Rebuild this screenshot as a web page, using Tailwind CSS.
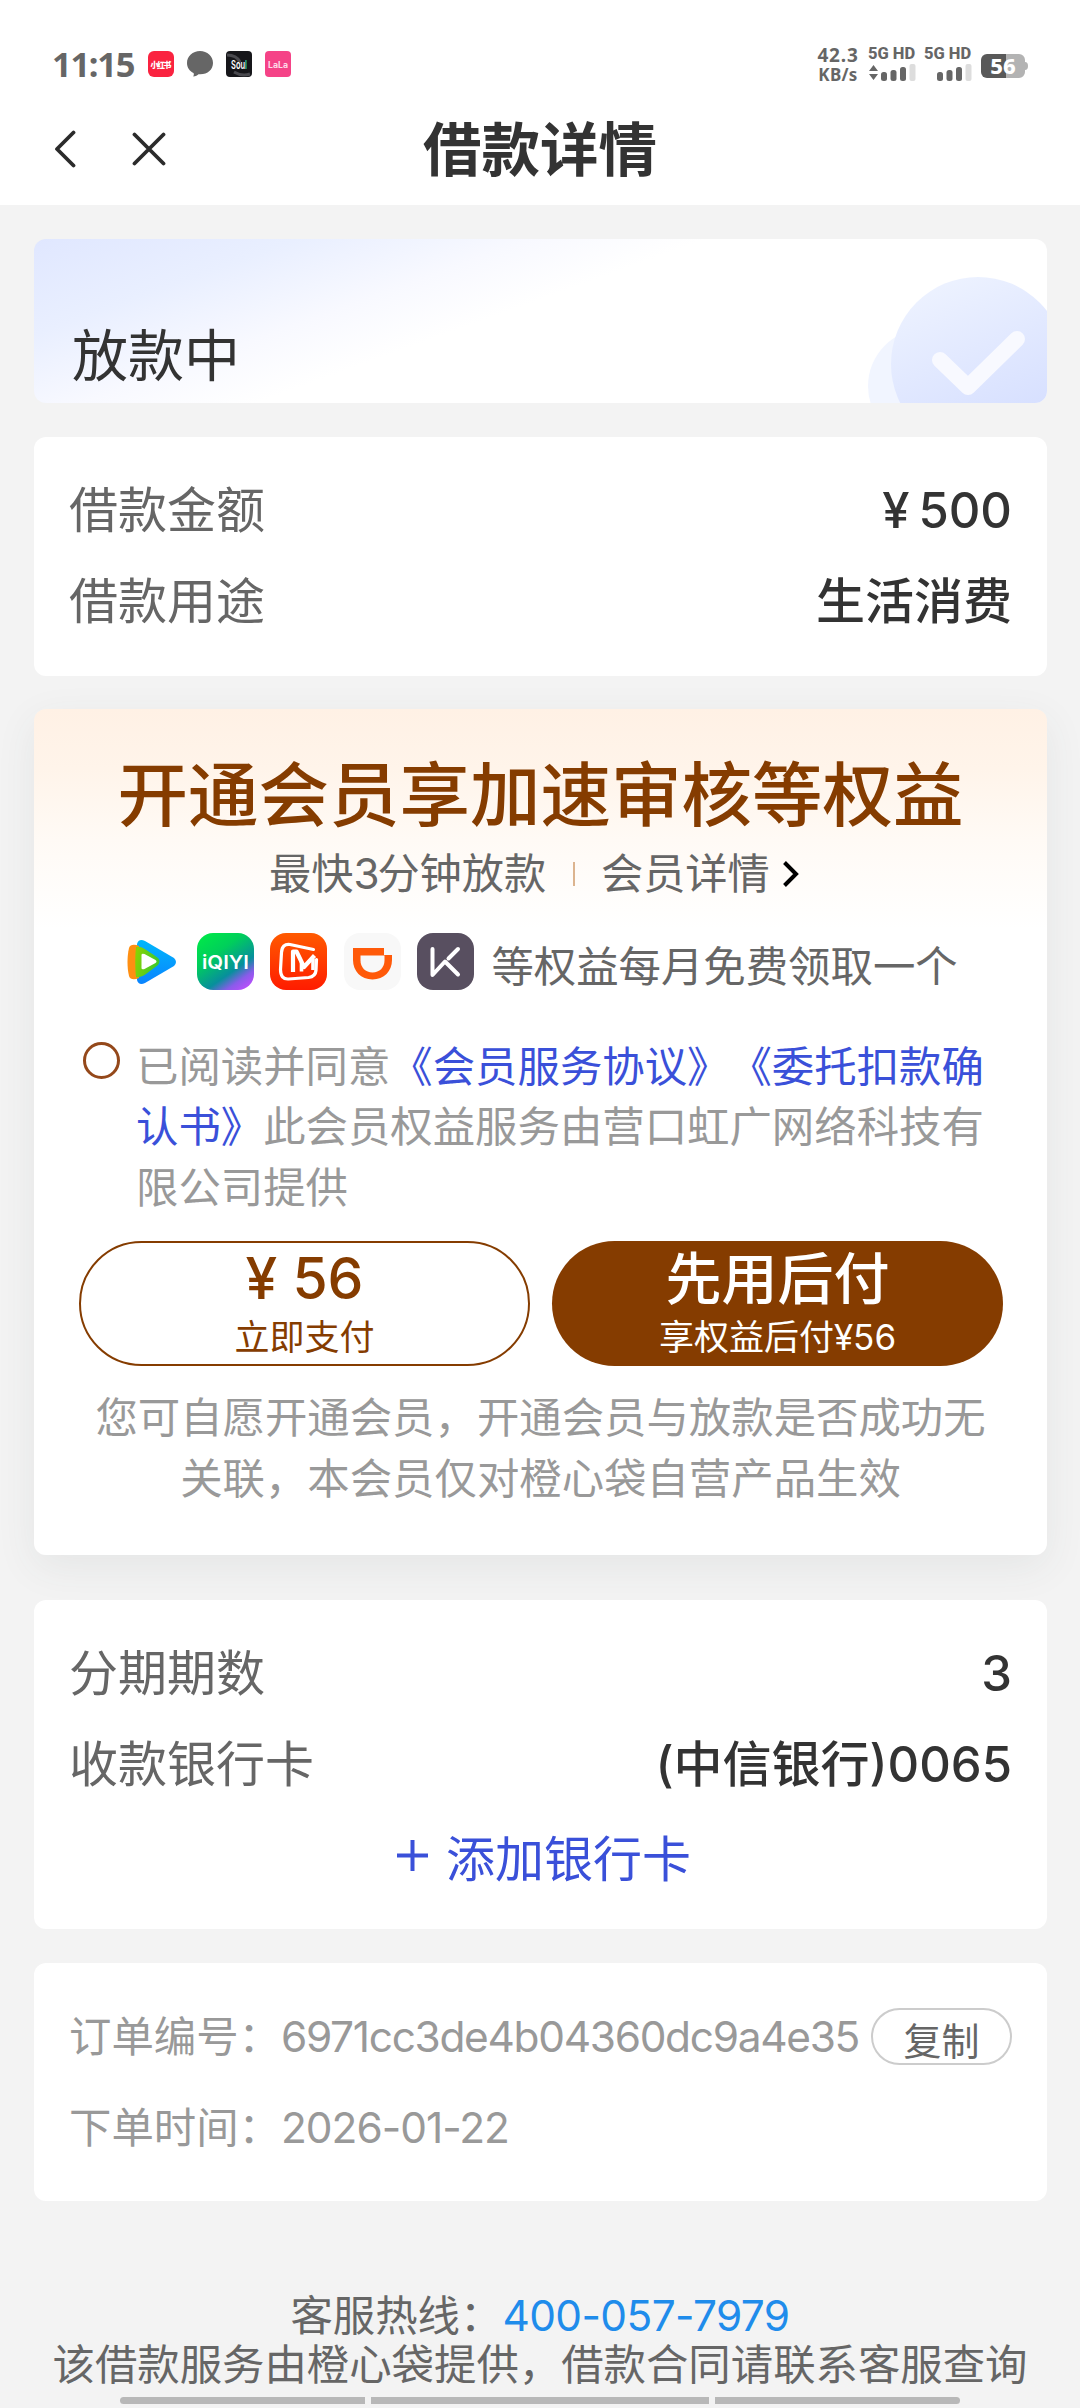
<!DOCTYPE html>
<html lang="zh-CN">
<head>
    <meta charset="UTF-8">
    <meta name="viewport" content="width=device-width, initial-scale=1.0">
    <title>借款详情</title>
    <script src="https://cdn.jsdelivr.net/npm/@tailwindcss/browser@4"></script>
</head>
<body class="bg-[#f3f3f3]">
    <div class="w-[1080px] h-[2408px] overflow-hidden flex flex-col font-['Inter','Noto_Sans_CJK_SC',sans-serif] text-[#333] whitespace-nowrap [text-spacing-trim:space-all]">
        <!-- Header -->
        <header class="h-[205px] bg-white shrink-0">
            <div class="h-[100px] pt-[44px] pl-[52px] pr-[52px] flex items-start justify-between">
                <div class="flex items-center h-[39px]">
                    <span class="w-[96px] text-[34.500px] leading-[39px] font-bold text-[#666] font-['Noto_Sans',sans-serif] tracking-[-1.300px]">11:15</span>
                    <div class="flex gap-[13px]">
                        <svg class="w-[26px] h-[26px] overflow-visible" viewBox="0 0 26 26">
                            <rect width="26" height="26" rx="6" fill="#fa2340"/>
                            <text x="13" y="16.5" font-size="8" font-weight="900" fill="#fff" text-anchor="middle" textLength="21">小红书</text>
                        </svg>
                        <svg class="w-[26px] h-[26px]" viewBox="0 0 26 26">
                            <path d="M13 0C5.8 0 0 5 0 12c0 4.600 2.600 8 6.500 10 .6.900.4 2-.3 3.500 2.500-.3 4.300-1.300 5.300-2.300C20 24 26 19 26 12 26 5 20.200 0 13 0z" fill="#666"/>
                        </svg>
                        <svg class="w-[26px] h-[26px] overflow-visible" viewBox="0 0 26 26">
                            <rect width="26" height="26" rx="4" fill="#16161a"/>
                            <path d="M1 4c6 0 11 3 13 7M8 21c5 3 10 4 16 2" fill="none" stroke="#4a4a4f" stroke-width="3"/>
                            <text x="5" y="18" font-size="12" font-weight="600" fill="#fff" textLength="16" lengthAdjust="spacingAndGlyphs">Sou<tspan fill="#2fd6b5">l</tspan></text>
                        </svg>
                        <svg class="w-[26px] h-[26px] overflow-visible" viewBox="0 0 26 26">
                            <rect width="26" height="26" rx="4" fill="#f54387"/>
                            <text x="13" y="17" font-size="9" font-weight="700" fill="#ffd9e8" text-anchor="middle" textLength="20" lengthAdjust="spacingAndGlyphs">LaLa</text>
                        </svg>
                    </div>
                </div>
                <div class="flex text-[#666] font-['Noto_Sans',sans-serif] font-bold">
                    <div class="w-[42px] mr-[9px] flex flex-col items-center">
                        <div class="text-[19px] leading-[19px] mt-[2px] tracking-[0.800px]">42.3</div>
                        <div class="text-[17px] leading-[19px] tracking-[0.300px]">KB/s</div>
                    </div>
                    <div class="w-[48px] mr-[8px]">
                        <div class="text-[16.500px] leading-[19px] font-['Roboto',sans-serif] font-extrabold">5G HD</div>
                        <svg class="w-[48px] h-[17px] mt-[1px]" viewBox="0 0 48 17" fill="#666">
                            <path d="M1 7L5.500 1 10 7zM1 10h9l-4.500 6z"/>
                            <rect x="13" y="8" width="6" height="9" rx="2.500"/>
                            <rect x="22.500" y="6" width="6" height="11" rx="2.500"/>
                            <rect x="32" y="3" width="6" height="14" rx="2.500"/>
                            <rect x="41.500" y="0" width="6" height="17" rx="2" fill="#ddd"/>
                        </svg>
                    </div>
                    <div class="w-[48px] mr-[9px]">
                        <div class="text-[16.500px] leading-[19px] font-['Roboto',sans-serif] font-extrabold">5G HD</div>
                        <svg class="w-[48px] h-[17px] mt-[1px]" viewBox="0 0 48 17" fill="#666">
                            <rect x="13" y="8" width="6" height="9" rx="2.500"/>
                            <rect x="22.500" y="6" width="6" height="11" rx="2.500"/>
                            <rect x="32" y="3" width="6" height="14" rx="2.500"/>
                            <rect x="41.500" y="0" width="6" height="17" rx="2" fill="#ddd"/>
                        </svg>
                    </div>
                    <svg class="w-[47px] h-[24px] mt-[10px] overflow-visible" viewBox="0 0 47 24">
                        <path d="M24 0h14a6 6 0 0 1 6 6v2q3 0 3 4t-3 4v2a6 6 0 0 1-6 6H24z" fill="#b3b3b3"/>
                        <path d="M6 0h19v24H6a6 6 0 0 1-6-6V6a6 6 0 0 1 6-6z" fill="#595959"/>
                        <text x="22" y="20" font-size="22" font-weight="800" fill="#fff" text-anchor="middle">56</text>
                    </svg>
                </div>
            </div>
            <div class="h-[98px] grid grid-cols-[1fr_auto_1fr] items-center">
                <div class="flex items-center gap-[56px] pl-[54px]">
                    <svg class="w-[22px] h-[38px]" viewBox="0 0 22 38" fill="none" stroke="#2b2b2b" stroke-width="3.800" stroke-linecap="round" stroke-linejoin="round"><path d="M19.500 2.500L3 19l16.500 16.500"/></svg>
                    <svg class="w-[34px] h-[34px]" viewBox="0 0 34 34" fill="none" stroke="#2b2b2b" stroke-width="3.800" stroke-linecap="round"><path d="M2.500 2.500l29 29M31.500 2.500l-29 29"/></svg>
                </div>
                <h1 class="text-[58.500px] leading-[98px] font-bold relative top-px">借款详情</h1>
            </div>
        </header>

        <main class="pl-[34px] pr-[33px] pt-[34px]">
            <!-- Status banner -->
            <section class="relative h-[164px] rounded-[12px] overflow-hidden bg-white bg-[linear-gradient(160deg,#e0e7ff_0%,#e9efff_18%,#f8f9ff_34%,#fff_46%)]">
                <svg class="absolute right-0 bottom-0 w-[180px] h-[164px]" viewBox="0 0 180 164">
                    <defs>
                        <linearGradient id="disc" x1="0.2" y1="0" x2="0.6" y2="0.9">
                            <stop offset="0" stop-color="#eef3ff"/>
                            <stop offset="1" stop-color="#d6dfff"/>
                        </linearGradient>
                    </defs>
                    <circle cx="58" cy="147" r="57" fill="#f1f5ff"/>
                    <circle cx="111" cy="125" r="87" fill="url(#disc)"/>
                    <path d="M73 121l28 27 49-48" fill="none" stroke="#f8f9ff" stroke-width="16" stroke-linecap="round" stroke-linejoin="round"/>
                </svg>
                <div class="relative pl-[38px] pt-[82px] text-[56px] leading-[70px]">放款中</div>
            </section>

            <!-- Loan info -->
            <section class="mt-[34px] h-[239px] rounded-[12px] bg-white px-[35px] pt-[28px] text-[49px] leading-[91px]">
                <div class="flex justify-between"><span class="text-[#666]">借款金额</span><span class="font-medium">¥<span class="ml-[9px]">500</span></span></div>
                <div class="flex justify-between"><span class="text-[#666]">借款用途</span><span class="font-medium">生活消费</span></div>
            </section>

            <!-- Membership -->
            <section class="mt-[33px] h-[846px] rounded-[12px] bg-[linear-gradient(180deg,#fff1e5_0px,#fff4ea_60px,#fffaf5_130px,#fff_220px)] shadow-[0_12px_40px_rgba(60,80,80,0.08)] pt-[37px]">
                <h2 class="text-center text-[70.500px] leading-[100px] font-medium text-[#853c00]">开通会员享加速审核等权益</h2>
                <div class="h-[56px] flex items-center pl-[235px] text-[42.200px] leading-[56px] text-[#666]">
                    <span class="w-[304px]">最快<span class="tracking-[-2px]">3</span>分钟放款</span>
                    <span class="w-[2px] h-[24px] bg-[#dcb48f]"></span>
                    <span class="ml-[26px]">会员详情</span>
                    <svg class="ml-[12px] w-[18px] h-[26px]" viewBox="0 0 18 26" fill="none" stroke="#000" stroke-width="4"><path d="M2.500 1.500L14 13 2.500 24.500"/></svg>
                </div>
                <div class="mt-[31px] h-[57px] flex items-center pl-[89px]">
                    <div class="flex gap-[16.600px]">
                        <!-- Tencent Video -->
                        <svg class="w-[57px] h-[57px]" viewBox="0 0 57 57">
                            <defs>
                                <linearGradient id="tv" x1="0" y1="0" x2="0" y2="1"><stop offset="0" stop-color="#00b7fb"/><stop offset="1" stop-color="#0a84ff"/></linearGradient>
                                <linearGradient id="tvg" x1="0" y1="0" x2="1" y2="0.3"><stop offset="0" stop-color="#8fd400"/><stop offset="1" stop-color="#3fc92b"/></linearGradient>
                            </defs>
                            <path d="M14 11c1-4 4-5 8-3l29 17q4 4 0 8L22 50c-4 2-7 1-8-3z" fill="url(#tv)"/>
                            <path d="M6 15c1-4 6-4 10-2v32c-4 2-9 2-10-2-2-8-2-20 0-28z" fill="#ff8f12"/>
                            <path d="M13 14c5-1 8 1 22 11q3 3 0 7C22 42 18 45 13 44c-1-8-1-22 0-30z" fill="url(#tvg)"/>
                            <path d="M18.500 22q0-2 3-1l11 6q2 1.500 0 3l-11 6q-3 1-3-1z" fill="#fff"/>
                        </svg>
                        <!-- iQIYI -->
                        <svg class="w-[57px] h-[57px]" viewBox="0 0 57 57">
                            <defs>
                                <linearGradient id="qy" x1="0.200" y1="0" x2="0.900" y2="1"><stop offset="0" stop-color="#00e64a"/><stop offset="0.300" stop-color="#00cf5b"/><stop offset="0.650" stop-color="#078f9c"/><stop offset="0.820" stop-color="#8a5bea"/><stop offset="1" stop-color="#c44bff"/></linearGradient>
                            </defs>
                            <rect width="57" height="57" rx="16" fill="url(#qy)"/>
                            <text x="28.500" y="35.500" font-size="19" font-weight="600" fill="#fff" text-anchor="middle" textLength="47" lengthAdjust="spacingAndGlyphs">iQIYI</text>
                        </svg>
                        <!-- Mango TV -->
                        <svg class="w-[57px] h-[57px]" viewBox="0 0 57 57">
                            <defs>
                                <linearGradient id="mg" x1="0" y1="0" x2="0" y2="1"><stop offset="0" stop-color="#ff5a00"/><stop offset="1" stop-color="#ff1c00"/></linearGradient>
                            </defs>
                            <rect width="57" height="57" rx="16" fill="url(#mg)"/>
                            <path d="M43.500 16.500L20 11.500q-8-1-8.500 8l-1 17q0 10 8 9.500l20-1.500q7-1 7.500-7l.5-11" fill="none" stroke="#fff" stroke-width="3.200" stroke-linecap="round" stroke-linejoin="round"/>
                            <path d="M23 39V18.500h3.500L34 34l10.500-11.500" fill="none" stroke="#fff" stroke-width="4.200" stroke-linejoin="round"/>
                            <path d="M31.500 29v9.500M43 26v11" fill="none" stroke="#fff" stroke-width="3.600"/>
                        </svg>
                        <!-- DiDi -->
                        <svg class="w-[57px] h-[57px]" viewBox="0 0 57 57">
                            <rect width="57" height="57" rx="16" fill="#f8f8f8"/>
                            <path d="M9 15h31v7h8v5c0 11-8 19.500-19.500 19.500S9 38 9 27z" fill="#ff5a0a"/>
                            <path d="M16.500 22.500h24v5c0 7-5 12-12 12s-12-5-12-12z" fill="#f8f8f8"/>
                        </svg>
                        <!-- Keep -->
                        <svg class="w-[57px] h-[57px]" viewBox="0 0 57 57">
                            <rect width="57" height="57" rx="16" fill="#584f60"/>
                            <path d="M15.500 16v26L28 28.500 41 41.500M31.500 25.500L41 16" fill="none" stroke="#fff" stroke-width="4" stroke-linecap="round" stroke-linejoin="round"/>
                        </svg>
                    </div>
                    <span class="ml-[17px] mt-[10px] text-[42.400px] leading-[56px] text-[#666]">等权益每月免费领取一个</span>
                </div>
                <div class="mt-[47px] flex pl-[49px] text-[42.400px] leading-[60.400px] text-[#999]">
                    <span class="w-[37px] h-[37px] mt-[5px] mr-[16px] rounded-full border-[3px] border-[#94481a]"></span>
                    <p>已阅读并同意<span class="text-[#3a50d9]">《会员服务协议》《委托扣款确<br>认书》</span>此会员权益服务由营口虹广网络科技有<br>限公司提供</p>
                </div>
                <div class="mt-[23px] flex gap-[22px] px-[45px] text-center">
                    <button class="w-[451px] h-[125px] shrink-0 rounded-full border-2 border-[#853c00] text-[#853c00] pb-[6px]">
                        <div class="text-[57px] leading-[72px] font-medium">¥ 56</div>
                        <div class="text-[35px] leading-[44px]">立即支付</div>
                    </button>
                    <button class="w-[451px] h-[125px] shrink-0 rounded-full bg-[#853c00] text-white pb-[6px]">
                        <div class="text-[56px] leading-[72px] font-medium">先用后付</div>
                        <div class="text-[35px] leading-[44px]">享权益后付¥56</div>
                    </button>
                </div>
                <p class="mt-[22px] text-center text-[42.400px] leading-[60.400px] text-[#999]">您可自愿开通会员，开通会员与放款是否成功无<br>关联，本会员仅对橙心袋自营产品生效</p>
            </section>

            <!-- Repayment -->
            <section class="mt-[45px] h-[329px] rounded-[12px] bg-white px-[35px] pt-[28px] text-[49px] leading-[91px]">
                <div class="flex justify-between"><span class="text-[#666]">分期期数</span><span class="font-medium">3</span></div>
                <div class="flex justify-between"><span class="text-[#666]">收款银行卡</span><span class="font-medium">(中信银行)0065</span></div>
                <div class="mt-[4px] flex items-center pl-[328px] text-[#3a50d9]">
                    <svg class="w-[31px] h-[31px] mr-[18px] -mt-[9px]" viewBox="0 0 31 31" stroke="#3a50d9" stroke-width="4"><path d="M15.500 0v31M0 15.500h31"/></svg>
                    <span>添加银行卡</span>
                </div>
            </section>

            <!-- Order -->
            <section class="mt-[34px] h-[238px] rounded-[12px] bg-white px-[35px] pt-[28px] text-[42.400px] leading-[91px] text-[#999]">
                <div class="flex items-center">
                    <span>订单编号：</span><span class="w-[591px] tracking-[-1.300px]">6971cc3de4b04360dc9a4e35</span>
                    <button class="w-[141px] h-[57px] shrink-0 rounded-full border-2 border-[#ccc] text-[38px] leading-[62px] text-[#666]">复制</button>
                </div>
                <div>下单时间：<span class="tracking-[-1px]">2026-01-22</span></div>
            </section>
        </main>

        <!-- Footer -->
        <footer class="mt-[90px] text-center text-[42.400px] leading-[49px] text-[#666]">
            <div>客服热线：<span class="text-[#1f8ceb] tracking-[-0.600px]">400-057-7979</span></div>
            <div>该借款服务由橙心袋提供，借款合同请联系客服查询</div>
            <div class="mt-[8px] flex justify-center gap-[6px]">
                <span class="w-[245px] h-[7px] rounded-l-full bg-[#b8b8b8]"></span>
                <span class="w-[338px] h-[7px] bg-[#b8b8b8]"></span>
                <span class="w-[245px] h-[7px] rounded-r-full bg-[#b8b8b8]"></span>
            </div>
        </footer>
    </div>
</body>
</html>
